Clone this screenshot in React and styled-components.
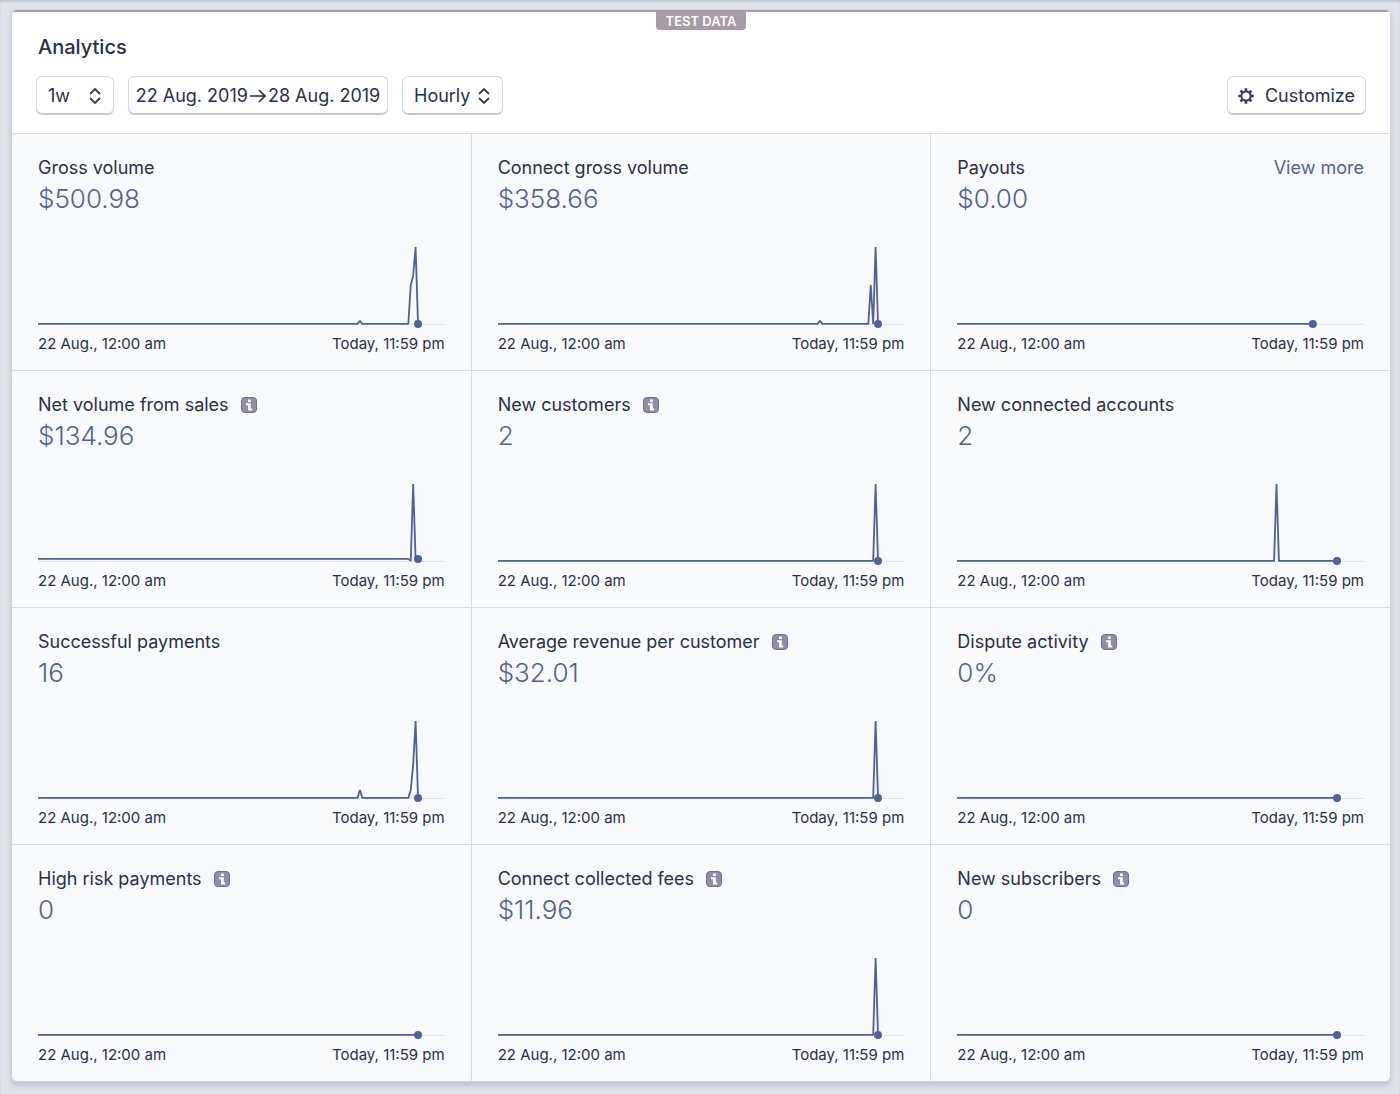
import React from "react";
import styled, { createGlobalStyle } from "styled-components";

const Global = createGlobalStyle`
  *, *::before, *::after { box-sizing: border-box; }
  body {
    margin: 0;
    background: #e0e3ea;
    color: #2a2f45;
    font-family: Inter, "Liberation Sans", sans-serif;
  }
`;

const Page = styled.div`
  min-height: 100vh;
  padding: 10px 10px 12px 12px;
  box-shadow: inset 0 2px 2px #c6cbd9;
`;

const Card = styled.main`
  background: #fff;
  border-radius: 5px;
  box-shadow: 0 0 0 1px #cdd1df, 0 4px 4px #bfc4d4, 0 4px 10px #c9cedb;
  overflow: hidden;
`;

const Banner = styled.div`
  display: flex;
  justify-content: center;
  height: 20px;
  border-top: 2px solid #a79ba8;
`;

const BannerLabel = styled.span`
  height: 18px;
  padding: 0 10px;
  border-radius: 0 0 4px 4px;
  background: #a79ba8;
  color: #fff;
  font-size: 13px;
  font-weight: 600;
  line-height: 18px;
`;

const Header = styled.header`
  padding: 4px 24px 18px;
  border-bottom: 1px solid #d8dce4;
`;

const Title = styled.h1`
  margin: 0 2px 16px;
  font-size: 20px;
  font-weight: 500;
  line-height: 26px;
`;

const Toolbar = styled.div`
  display: flex;
  flex-wrap: wrap;
  align-items: center;
  gap: 14px;
`;

const controlBox = `
  height: 39px;
  border: 1px solid #d2d7e2;
  border-bottom-color: #c0c8d8;
  border-radius: 6px;
  background: #fff;
  box-shadow: inset 0 -1px 0 #c0c8d8;
  color: #2a2f45;
  font-family: inherit;
  font-size: 18px;
  line-height: 23px;
`;

const SelectBox = styled.label`
  display: grid;
  align-items: center;
  width: ${(p) => p.$width}px;

  > * { grid-area: 1 / 1; }

  svg {
    justify-self: end;
    margin-right: 13px;
    pointer-events: none;
  }
`;

const Select = styled.select`
  ${controlBox}
  appearance: none;
  width: 100%;
  padding: 0 28px 0 11px;
`;

const RangeButton = styled.button`
  ${controlBox}
  display: flex;
  align-items: center;
  justify-content: center;
  gap: 2px;
  width: 260px;
  padding: 0;
`;

const CustomizeButton = styled.button`
  ${controlBox}
  display: flex;
  align-items: center;
  gap: 11px;
  margin-left: auto;
  padding: 0 10px;
`;

const Grid = styled.section`
  display: grid;
  grid-template-columns: repeat(3, minmax(0, 1fr));
  gap: 1px;
  background: #d9dce5;
`;

const Cell = styled.article`
  padding: 22px 26px 16px;
  background: #f9fafc;
`;

const CellHead = styled.div`
  display: flex;
  align-items: center;
  gap: 12px;
  height: 24px;
`;

const CellTitle = styled.h2`
  margin: 0;
  font-size: 18px;
  font-weight: 400;
  line-height: 24px;
`;

const MoreLink = styled.a`
  margin-left: auto;
  color: #535f98;
  font-size: 18px;
  line-height: 24px;
  text-decoration: none;
`;

const InfoButton = styled.button`
  display: flex;
  padding: 0;
  border: 0;
  background: none;
`;

const Value = styled.p`
  margin: 3px 0 13px;
  color: #535f98;
  font-size: 26px;
  font-weight: 300;
  line-height: 32px;
`;

const Plot = styled.svg`
  display: block;
  width: 100%;
  height: auto;
  overflow: visible;
`;

const Axis = styled.div`
  display: flex;
  justify-content: space-between;
  margin-top: 4px;
  font-size: 15px;
  line-height: 20px;
`;

const HOURS = 168;
const PLOT_WIDTH = 407;
const PLOT_HEIGHT = 102;
const BASE = 96;

function Chart({ label, points = [], end = 157, level = 0 }) {
  const x = (hour) => (hour * PLOT_WIDTH) / HOURS;
  const all = [[0, level], ...points, [end, level]];
  const line = all.map(([hour, v]) => `${x(hour)},${BASE - v}`).join(" ");
  return (
    <Plot viewBox={`0 0 ${PLOT_WIDTH} ${PLOT_HEIGHT}`} role="img" aria-label={label}>
      <path d={`M0 ${BASE + 0.5}H${PLOT_WIDTH}`} stroke="#dfe2ea" />
      <polyline points={line} fill="none" stroke="#535f98" strokeWidth="1.8" strokeLinejoin="bevel" />
      <circle cx={x(end)} cy={BASE - level} r="4" fill="#535f98" />
    </Plot>
  );
}

function InfoIcon() {
  return (
    <svg width="16" height="16" viewBox="0 0 16 16" aria-hidden="true">
      <rect x="0.5" y="0.5" width="15" height="15" rx="3.5" fill="#938ca6" stroke="#6670a0" />
      <path d="M7 2.500h2.800v2.400H7zM5 6.200h4.800v5.200h1.400v2H7v-5.200H5z" fill="#fff" />
    </svg>
  );
}

function Chevrons() {
  return (
    <svg width="12" height="16" viewBox="0 0 12 16" fill="none" stroke="#353b5c" strokeWidth="1.8" aria-hidden="true">
      <path d="M1 6l5-5 5 5M1 10l5 5 5-5" />
    </svg>
  );
}

function ArrowRight() {
  return (
    <svg width="16" height="14" viewBox="0 0 16 14" fill="none" stroke="#2a2f45" strokeWidth="1.7" aria-hidden="true">
      <path d="M0 7h15M9 1L15 7l-6 6" />
    </svg>
  );
}

function Gear() {
  return (
    <svg width="16" height="16" viewBox="0 0 16 16" fill="none" stroke="#353b6c" aria-hidden="true">
      <circle cx="8" cy="8" r="4.600" strokeWidth="2" />
      {[0, 45, 90, 135, 180, 225, 270, 315].map((angle) => (
        <path key={angle} d="M8 3.200V0.300" strokeWidth="2.600" transform={`rotate(${angle} 8 8)`} />
      ))}
    </svg>
  );
}

const METRICS = [
  { title: "Gross volume", value: "$500.98", points: [[132, 0], [133, 3], [134, 0], [153, 0], [154, 39], [155, 48], [156, 77]] },
  { title: "Connect gross volume", value: "$358.66", points: [[132, 0], [133, 3], [134, 0], [153, 0], [154, 39], [155, 0], [156, 77]] },
  { title: "Payouts", value: "$0.00", more: true, end: 147 },
  { title: "Net volume from sales", value: "$134.96", info: true, level: 2, points: [[153, 2], [154, 0], [155, 77], [156, 2]] },
  { title: "New customers", value: "2", info: true, points: [[155, 0], [156, 77]] },
  { title: "New connected accounts", value: "2", points: [[131, 0], [132, 77], [133, 0]] },
  { title: "Successful payments", value: "16", points: [[132, 0], [133, 8], [134, 0], [153, 0], [154, 8], [155, 33], [156, 77]] },
  { title: "Average revenue per customer", value: "$32.01", info: true, points: [[155, 0], [156, 77]] },
  { title: "Dispute activity", value: "0%", info: true },
  { title: "High risk payments", value: "0", info: true },
  { title: "Connect collected fees", value: "$11.96", info: true, points: [[155, 0], [156, 77]] },
  { title: "New subscribers", value: "0", info: true },
];

function Metric({ title, value, info, more, points, end, level }) {
  return (
    <Cell>
      <CellHead>
        <CellTitle>{title}</CellTitle>
        {info && (
          <InfoButton type="button" aria-label={`About ${title}`}>
            <InfoIcon />
          </InfoButton>
        )}
        {more && <MoreLink href="#payouts">View more</MoreLink>}
      </CellHead>
      <Value>{value}</Value>
      <Chart label={title} points={points} end={end} level={level} />
      <Axis>
        <span>22 Aug., 12:00 am</span>
        <span>Today, 11:59 pm</span>
      </Axis>
    </Cell>
  );
}

export default function App() {
  return (
    <Page>
      <Global />
      <Card>
        <Banner>
          <BannerLabel>TEST DATA</BannerLabel>
        </Banner>
        <Header>
          <Title>Analytics</Title>
          <Toolbar>
            <SelectBox $width={78}>
              <Select aria-label="Period" defaultValue="1w">
                <option>1w</option>
              </Select>
              <Chevrons />
            </SelectBox>
            <RangeButton type="button">
              <span>22 Aug. 2019</span>
              <ArrowRight />
              <span>28 Aug. 2019</span>
            </RangeButton>
            <SelectBox $width={101}>
              <Select aria-label="Interval" defaultValue="Hourly">
                <option>Hourly</option>
              </Select>
              <Chevrons />
            </SelectBox>
            <CustomizeButton type="button">
              <Gear />
              Customize
            </CustomizeButton>
          </Toolbar>
        </Header>
        <Grid>
          {METRICS.map((metric) => (
            <Metric key={metric.title} {...metric} />
          ))}
        </Grid>
      </Card>
    </Page>
  );
}
